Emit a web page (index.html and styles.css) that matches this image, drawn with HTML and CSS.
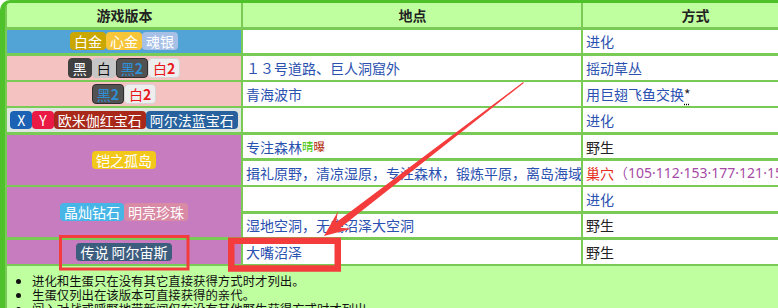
FILE: index.html
```html
<!DOCTYPE html>
<html lang="zh-CN">
<head>
<meta charset="utf-8">
<title>获得方式</title>
<link rel="stylesheet" href="styles.css">
</head>
<body>
<div class="page">
  <div class="tbl">
    <div class="c h">游戏版本</div>
    <div class="c h">地点</div>
    <div class="c h">方式</div>

    <div class="c v blue">
      <span class="b gold">白金</span><span class="b hg">心金</span><span class="b ss">魂银</span>
    </div>
    <div class="c"></div>
    <div class="c"><span class="a">进化</span></div>

    <div class="c v pink">
      <span class="b bd black">黑</span><span class="b bd white">白</span><span class="b bd black2">黑<span class="n2">2</span></span><span class="b bd white2">白<span class="n2">2</span></span>
    </div>
    <div class="c"><span class="a">１３号道路、巨人洞窟外</span></div>
    <div class="c"><span class="a">摇动草丛</span></div>

    <div class="c v pink">
      <span class="b bd black2">黑<span class="n2">2</span></span><span class="b bd white2">白<span class="n2">2</span></span>
    </div>
    <div class="c"><span class="a">青海波市</span></div>
    <div class="c"><span class="a">用巨翅飞鱼交换</span><span class="ab">*</span></div>

    <div class="c v gray">
      <span class="b lat x">X</span><span class="b lat y">Y</span><span class="b ruby">欧米伽红宝石</span><span class="b sapph">阿尔法蓝宝石</span>
    </div>
    <div class="c"></div>
    <div class="c"><span class="a">进化</span></div>

    <div class="c v purple span2">
      <span class="b armor">铠之孤岛</span>
    </div>
    <div class="c"><span class="a">专注森林</span><span class="sup"><span class="g">晴</span><span class="dr">曝</span></span></div>
    <div class="c">野生</div>
    <div class="c"><span class="a">揖礼原野，清凉湿原，专注森林，锻炼平原，离岛海域</span></div>
    <div class="c"><span class="r">巢穴</span><span class="pu">（<span class="num">105·112·153·177·121·151·161·178</span>）</span></div>

    <div class="c v purple span2">
      <span class="b bdia">晶灿钻石</span><span class="b spearl">明亮珍珠</span>
    </div>
    <div class="c"></div>
    <div class="c"><span class="a">进化</span></div>
    <div class="c"><span class="a">湿地空洞，无底沼泽大空洞</span></div>
    <div class="c">野生</div>

    <div class="c v purple">
      <span class="b arceus">传说 阿尔宙斯</span>
    </div>
    <div class="c"><span class="a">大嘴沼泽</span></div>
    <div class="c">野生</div>

    <div class="notes">
      <ul>
        <li>进化和生蛋只在没有其它直接获得方式时才列出。</li>
        <li>生蛋仅列出在该版本可直接获得的亲代。</li>
        <li>闯入对战或呼野地带新闻仅在没有其他野生获得方式时才列出。</li>
      </ul>
    </div>
  </div>

  <svg class="marks" width="778" height="308" viewBox="0 0 778 308">
    <rect x="60.5" y="236.5" width="127.5" height="32.5" fill="none" stroke="#f43c3c" stroke-width="3"/>
    <rect x="231.25" y="240.75" width="106.5" height="27.75" fill="none" stroke="#f43c3c" stroke-width="6.5"/>
    <polygon points="523.8,82.9 340.4,227.8 351.3,228.8 324,236 337.9,211.4 336.2,222.2 523.2,82.1" fill="#f43c3c"/>
  </svg>
</div>
</body>
</html>
```

FILE: styles.css
```css
body {
  margin: 0;
  overflow: hidden;
  font-family: "Noto Sans CJK SC", "Noto Sans", sans-serif;
  font-size: 14px;
  color: #222;
}

.page {
  position: relative;
  width: 778px;
  height: 308px;
  overflow: hidden;
}

.tbl {
  display: grid;
  grid-template-columns: 234px 338px 224px;
  grid-template-rows: 24px repeat(9, 23.8px) auto;
  row-gap: 2.5px;
  column-gap: 2px;
  width: max-content;
  background: #7acb55;
  border-top: 3px solid #4fc22b;
  border-left: 5px solid #4fc22b;
  padding-left: 2px;
  border-top-left-radius: 10px;
  overflow: hidden;
}

.c {
  display: flex;
  align-items: center;
  background: #fff;
  padding: 0 2px 0 3px;
  white-space: nowrap;
  overflow: hidden;
  line-height: 18px;
}

.h {
  justify-content: center;
  background: #c0ffa0;
  font-weight: bold;
  color: #222;
}

.v {
  justify-content: center;
  padding: 0;
}

.span2 { grid-row: span 2; }

.blue { background: #52a3d6; }
.pink { background: #f4c2c1; }
.gray { background: #dfe5e1; }
.purple { background: #c77cbf; }

.b {
  display: inline-block;
  padding: 0 4px;
  border-radius: 4px;
  color: #fff;
  line-height: 18px;
  font-size: 14px;
}

.bd { border: 1px solid transparent; }
.lat { padding: 0 7px; }
.n2 { font-weight: bold; }

.gold { background: #c9a700; }
.hg { background: #f6c538; }
.ss { background: #a6c0e6; }

.black { background: #404040; border-color: #404040; }
.white { background: #c6c6c6; border-color: #c6c6c6; color: #111; }
.black2 { background: #525252; border-color: #2e2e2e; color: #2e8fd6; }
.white2 { background: #eeeeee; border-color: #d6d6d6; color: #e8161a; }

.x { background: #1b62b4; }
.y { background: #ea1a44; }
.ruby { background: #a8281a; }
.sapph { background: #27629e; }

.armor { background: #f2c81a; }
.bdia { background: #47b6e6; }
.spearl { background: #d98aa5; }
.arceus { background: #3d5d7e; }

.a { color: #2a50b0; }
.r { color: #e52b20; }
.pu { color: #a64aa6; }
.num { font-family: "Noto Sans", "Liberation Sans", sans-serif; }

.ab {
  color: #222;
  text-decoration: underline dotted #000;
  text-underline-offset: 4px;
}

.sup {
  font-size: 11.5px;
  line-height: 1;
  vertical-align: 6px;
}
.g { color: #3dc400; }
.dr { color: #b01c00; }

.notes {
  grid-column: 1 / -1;
  background: #c0ffa0;
  padding: 8px 0 12px 0;
  font-size: 12.4px;
  line-height: 14px;
  color: #111;
}

.notes ul {
  margin: 0;
  padding-left: 25px;
}

.marks {
  position: absolute;
  left: 0;
  top: 0;
  pointer-events: none;
}
```
